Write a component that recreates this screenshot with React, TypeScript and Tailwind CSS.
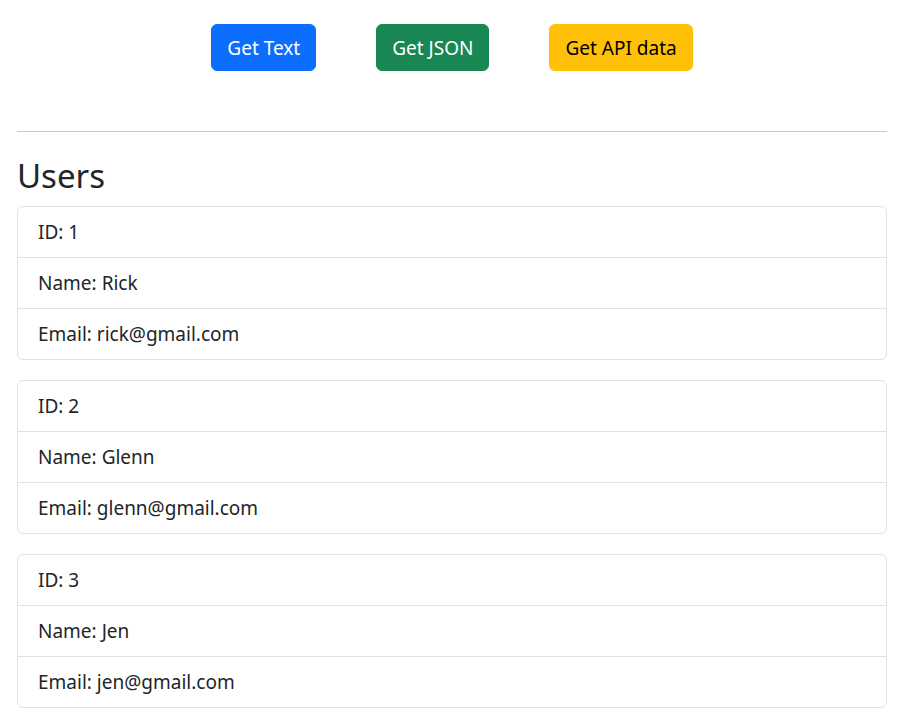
const users = [
  { id: 1, name: 'Rick', email: 'rick@gmail.com' },
  { id: 2, name: 'Glenn', email: 'glenn@gmail.com' },
  { id: 3, name: 'Jen', email: 'jen@gmail.com' },
];

export default function App() {
  return (
    <div className="min-h-screen bg-white pl-[17px] pr-[19px] pt-[24px] font-['Noto_Sans',sans-serif] text-[#212529]">
      <div className="flex justify-center gap-[60px]">
        <button className="rounded-[6px] border border-[#0d6efd] bg-[#0d6efd] px-[15px] py-[7.5px] text-[19px] leading-[30px] text-white">
          Get Text
        </button>
        <button className="rounded-[6px] border border-[#198754] bg-[#198754] px-[15px] py-[7.5px] text-[19px] leading-[30px] text-white">
          Get JSON
        </button>
        <button className="rounded-[6px] border border-[#ffc107] bg-[#ffc107] px-[15px] py-[7.5px] text-[19px] leading-[30px] text-black">
          Get API data
        </button>
      </div>
      <hr className="mt-[60px] mb-[20px] border-t border-[#c8c9ca]" />
      <h2 className="mb-[9px] pt-[3px] text-[33px] leading-[42px] font-normal">Users</h2>
      <div className="flex flex-col gap-[20px]">
        {users.map((u) => (
          <UserCard key={u.id} {...u} />
        ))}
      </div>
    </div>
  );
}

function UserCard({ id, name, email }: { id: number; name: string; email: string }) {
  return (
    <ul className="rounded-[6px] border border-[#dee2e6]">
      <li className="border-b border-[#dee2e6] px-[20px] py-[10px] text-[19px] leading-[30px]">ID: {id}</li>
      <li className="border-b border-[#dee2e6] px-[20px] py-[10px] text-[19px] leading-[30px]">Name: {name}</li>
      <li className="px-[20px] py-[10px] text-[19px] leading-[30px]">Email: {email}</li>
    </ul>
  );
}
